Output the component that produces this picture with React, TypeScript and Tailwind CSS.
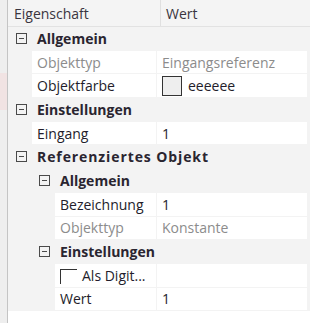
import React from "react";

type Row =
  | { kind: "cat"; level: number; label: string; wide?: boolean }
  | {
      kind: "prop";
      level: number;
      label: string;
      value?: string;
      muted?: boolean;
      swatch?: boolean;
      check?: boolean;
    };

const rows: Row[] = [
  { kind: "cat", level: 0, label: "Allgemein" },
  { kind: "prop", level: 1, label: "Objekttyp", value: "Eingangsreferenz", muted: true },
  { kind: "prop", level: 1, label: "Objektfarbe", value: "eeeeee", swatch: true },
  { kind: "cat", level: 0, label: "Einstellungen" },
  { kind: "prop", level: 1, label: "Eingang", value: "1" },
  { kind: "cat", level: 0, label: "Referenziertes Objekt", wide: true },
  { kind: "cat", level: 1, label: "Allgemein" },
  { kind: "prop", level: 2, label: "Bezeichnung", value: "1" },
  { kind: "prop", level: 2, label: "Objekttyp", value: "Konstante", muted: true },
  { kind: "cat", level: 1, label: "Einstellungen" },
  { kind: "prop", level: 2, label: "Als Digit...", check: true },
  { kind: "prop", level: 2, label: "Wert", value: "1" },
];

function Expander() {
  return (
    <span className="relative inline-block w-[11px] h-[11px] border border-[#4a4a4a] shrink-0">
      <span className="absolute left-[2px] right-[2px] top-[4px] h-px bg-[#4a4a4a]" />
    </span>
  );
}

function CategoryRow({ level, label, wide }: { level: number; label: string; wide?: boolean }) {
  return (
    <div className="flex items-center h-[22.7px] shrink-0">
      <div className={level === 0 ? "w-[8px]" : "w-[31px]"} />
      <Expander />
      <span
        className={
          "ml-[10px] font-bold text-[#2a2530] whitespace-nowrap" +
          (wide ? " tracking-[0.9px]" : "")
        }
      >
        {label}
      </span>
    </div>
  );
}

function PropRow({ row }: { row: Extract<Row, { kind: "prop" }> }) {
  const indent = row.level === 1 ? "w-[24px]" : "w-[47px]";
  const tone = row.muted ? "text-[#8c8c8c]" : "text-[#231d2b]";
  return (
    <div className="flex h-[22.7px] shrink-0">
      <div className={indent + " shrink-0"} />
      <div className="flex-1 bg-white flex items-center pl-[5px] overflow-hidden">
        {row.check ? (
          <>
            <span className="w-[17px] h-[15px] border-t border-l border-[#333] mr-[5px] mt-[3px] shrink-0" />
            <span className="text-[#231d2b] whitespace-nowrap">{row.label}</span>
          </>
        ) : (
          <span className={tone + " whitespace-nowrap"}>{row.label}</span>
        )}
      </div>
      <div className="w-px shrink-0" />
      <div className="w-[150px] shrink-0 bg-white flex items-center pl-[5px]">
        {row.swatch && (
          <span className="w-[20px] h-[20px] border border-[#333] bg-[#eeeeee] mr-[6px]" />
        )}
        {row.value && <span className={tone}>{row.value}</span>}
      </div>
      <div className="w-[3px] shrink-0" />
    </div>
  );
}

export default function App() {
  return (
    <div
      className="w-[310px] h-[323px] flex bg-[#f3f3f3] text-[14px] overflow-hidden"
      style={{ fontFamily: '"Open Sans", "Noto Sans", sans-serif' }}
    >
      <div className="w-[7px] flex flex-col bg-[#eeeeee]">
        <div className="h-[73px]" />
        <div className="h-[37px] bg-[#f1e3e3]" />
      </div>
      <div className="w-px bg-[#c4c4c4]" />
      <div className="flex-1 flex flex-col">
        <div className="flex h-[27px] shrink-0 border-b border-[#e2e2e2] bg-[#f4f4f4] text-[#3a3540]">
          <div className="w-[152px] flex items-center pl-[6px]">Eigenschaft</div>
          <div className="w-px bg-[#e0e0e0]" />
          <div className="flex-1 flex items-center pl-[5px]">Wert</div>
        </div>
        <div className="flex flex-col gap-px">
          {rows.map((r, i) =>
            r.kind === "cat" ? (
              <CategoryRow key={i} level={r.level} label={r.label} wide={r.wide} />
            ) : (
              <PropRow key={i} row={r} />
            )
          )}
        </div>
        <div className="flex-1 mt-px bg-white" />
      </div>
    </div>
  );
}
